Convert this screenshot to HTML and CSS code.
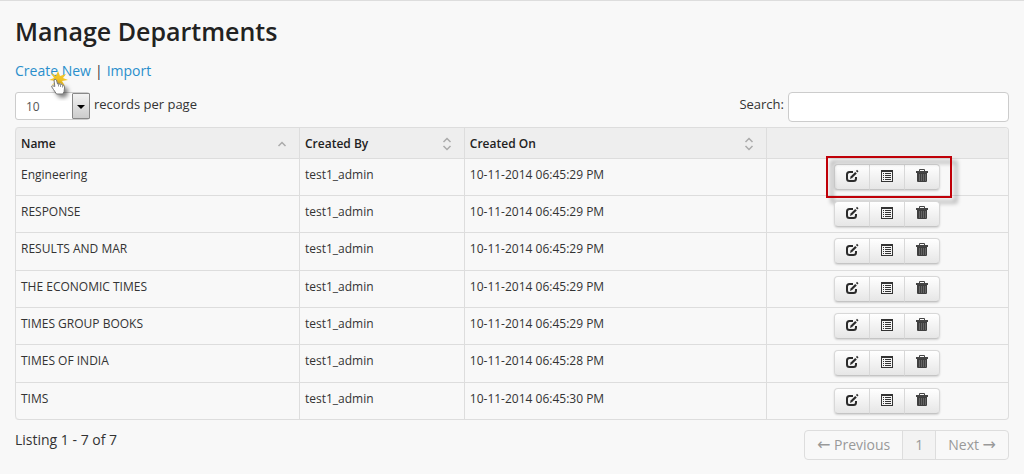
FILE: index.html
```html
<!DOCTYPE html>
<html lang="en">
<head>
<meta charset="utf-8">
<title>Manage Departments</title>
<link rel="stylesheet" href="styles.css">
</head>
<body>
<svg class="sprite" aria-hidden="true">
  <symbol id="edit" viewBox="0 0 14 14"><path d="M8 3H4.500Q2 3 2 5.500v4Q2 12 4.500 12h4Q11 12 11 9.500V8" fill="none" stroke="#2b2b2b" stroke-width="2"/><path d="M5 10l.6-2.400 4.600-4.700 1.600 1.600-4.700 4.600z" fill="#2b2b2b"/><path d="M11 2l1-1.200 1.500 1.400-1.200 1.200z" fill="#2b2b2b"/></symbol>
  <symbol id="list" viewBox="0 0 14 14"><path d="M1 1h12v12H1z" fill="#333"/><path d="M2 3h10v9H2z" fill="#f5f5f5"/><path d="M3 4h1v1H3zm2 0h6v1H5zM3 6h1v1H3zm2 0h6v1H5zM3 8h1v1H3zm2 0h6v1H5zM3 10h1v1H3zm2 0h6v1H5z" fill="#333"/></symbol>
  <symbol id="trash" viewBox="0 0 14 14"><path d="M4 2V1q0-1 1-1h4q1 0 1 1v1h3v2H1V2zM5 2h4V1H5z" fill="#444" fill-rule="evenodd"/><path d="M2 4h10v8q0 1-1 1H3q-1 0-1-1z" fill="#3f3f3f"/><path d="M4.500 5v7M6.500 5v7M8.500 5v7M10.500 5v7" stroke="#666"/></symbol>
  <symbol id="up" viewBox="0 0 10 14"><path d="M1.500 9L5 5.500 8.500 9" fill="none" stroke="#aaa" stroke-width="1.500"/></symbol>
  <symbol id="both" viewBox="0 0 10 14"><path d="M1.500 5L5 1.500 8.500 5M1.500 9L5 12.500 8.500 9" fill="none" stroke="#aaa" stroke-width="1.500"/></symbol>
</svg>
<main class="page">
  <h1 class="title">Manage Departments</h1>
  <nav class="links">
    <span class="pointed"><a href="#new">Create New</a>
      <svg class="pointer" viewBox="0 0 30 30" aria-hidden="true">
        <path d="M8 10l-7-1 5-2-3-5 5 3 2-5 2 5 6-2-3 4 5 2-6 1 3 5-5-3-2 5-2-5-5 3z" fill="#f3c526"/>
        <path class="hand" d="M6 9q1-1.500 2.500 0l1 4 1.200-.5 1.200.8 1.400-.2 1 1 1.300.2 1 1.700-.5 4.500-1.300 2.500H8.500L5.500 18.500 3.500 15.500q1-1.500 3.300 0z" fill="#fff" stroke="#777"/>
        <path d="M10.500 13v2.500M12.500 13.500v2.500M14.500 14v2.500" stroke="#999" fill="none"/>
      </svg></span>
    <span>|</span>
    <a href="#import">Import</a>
  </nav>
  <div class="toolbar">
    <label class="length"><span class="picker"><select class="select"><option>10</option><option>25</option><option>50</option></select><span class="arrow"></span></span>records per page</label>
    <label class="search">Search:<input class="field" type="text"></label>
  </div>
  <table class="grid">
    <colgroup><col class="c-name"><col class="c-by"><col class="c-on"><col class="c-act"></colgroup>
    <thead><tr>
      <th><div class="head">Name<svg class="sort"><use href="#up"/></svg></div></th>
      <th><div class="head">Created By<svg class="sort"><use href="#both"/></svg></div></th>
      <th><div class="head">Created On<svg class="sort"><use href="#both"/></svg></div></th>
      <th></th>
    </tr></thead>
    <tbody>
      <tr><td>Engineering</td><td>test1_admin</td><td>10-11-2014 06:45:29 PM</td><td class="actions"><div class="group"><button class="btn" aria-label="Edit"><svg><use href="#edit"/></svg></button><button class="btn" aria-label="Details"><svg><use href="#list"/></svg></button><button class="btn" aria-label="Delete"><svg><use href="#trash"/></svg></button><span class="callout"></span></div></td></tr>
      <tr><td>RESPONSE</td><td>test1_admin</td><td>10-11-2014 06:45:29 PM</td><td class="actions"><div class="group"><button class="btn" aria-label="Edit"><svg><use href="#edit"/></svg></button><button class="btn" aria-label="Details"><svg><use href="#list"/></svg></button><button class="btn" aria-label="Delete"><svg><use href="#trash"/></svg></button></div></td></tr>
      <tr><td>RESULTS AND MAR</td><td>test1_admin</td><td>10-11-2014 06:45:29 PM</td><td class="actions"><div class="group"><button class="btn" aria-label="Edit"><svg><use href="#edit"/></svg></button><button class="btn" aria-label="Details"><svg><use href="#list"/></svg></button><button class="btn" aria-label="Delete"><svg><use href="#trash"/></svg></button></div></td></tr>
      <tr><td>THE ECONOMIC TIMES</td><td>test1_admin</td><td>10-11-2014 06:45:29 PM</td><td class="actions"><div class="group"><button class="btn" aria-label="Edit"><svg><use href="#edit"/></svg></button><button class="btn" aria-label="Details"><svg><use href="#list"/></svg></button><button class="btn" aria-label="Delete"><svg><use href="#trash"/></svg></button></div></td></tr>
      <tr><td>TIMES GROUP BOOKS</td><td>test1_admin</td><td>10-11-2014 06:45:29 PM</td><td class="actions"><div class="group"><button class="btn" aria-label="Edit"><svg><use href="#edit"/></svg></button><button class="btn" aria-label="Details"><svg><use href="#list"/></svg></button><button class="btn" aria-label="Delete"><svg><use href="#trash"/></svg></button></div></td></tr>
      <tr><td>TIMES OF INDIA</td><td>test1_admin</td><td>10-11-2014 06:45:28 PM</td><td class="actions"><div class="group"><button class="btn" aria-label="Edit"><svg><use href="#edit"/></svg></button><button class="btn" aria-label="Details"><svg><use href="#list"/></svg></button><button class="btn" aria-label="Delete"><svg><use href="#trash"/></svg></button></div></td></tr>
      <tr><td>TIMS</td><td>test1_admin</td><td>10-11-2014 06:45:30 PM</td><td class="actions"><div class="group"><button class="btn" aria-label="Edit"><svg><use href="#edit"/></svg></button><button class="btn" aria-label="Details"><svg><use href="#list"/></svg></button><button class="btn" aria-label="Delete"><svg><use href="#trash"/></svg></button></div></td></tr>
    </tbody>
  </table>
  <footer class="footer">
    <span>Listing 1 - 7 of 7</span>
    <nav class="pager"><a href="#prev"><span class="glyph">←</span> Previous</a><a href="#1" class="current">1</a><a href="#next">Next <span class="glyph">→</span></a></nav>
  </footer>
</main>
</body>
</html>
```
FILE: styles.css
```css
* { box-sizing: border-box; }
body {
  margin: 0;
  background: #f8f8f8;
  color: #333;
  font: 14px/20px "Open Sans", sans-serif;
}
.sprite { position: absolute; width: 0; height: 0; }
.page { border-top: 1px solid #ddd; padding: 10px 15px 14px; }
.title { margin: 0; font-size: 25px; line-height: 40px; font-weight: 600; color: #222; }
a { color: #2a8fcc; text-decoration: none; }
.links { display: flex; gap: 4px; margin-top: 10px; }
.pointed { position: relative; }
.pointer { position: absolute; left: 33px; top: 10px; width: 30px; height: 30px; z-index: 1; }
.hand { filter: drop-shadow(3px 3px 2px rgba(0, 0, 0, .5)); }
.toolbar { display: flex; justify-content: space-between; margin-top: 11px; }
.length, .search { display: flex; gap: 4px; font-size: 13px; line-height: 24px; }
.picker { position: relative; height: 28px; }
.select {
  appearance: none;
  width: 75px;
  height: 28px;
  padding: 0 10px;
  border: 1px solid #ccc;
  border-radius: 3px;
  background: #fff;
  color: #555;
  font: 12px "Open Sans", sans-serif;
}
.arrow {
  position: absolute;
  right: 0;
  top: 1px;
  width: 18px;
  height: 26px;
  border: 1px solid #888;
  border-radius: 1px;
  background: linear-gradient(#f2f2f2, #ccc);
  pointer-events: none;
}
.arrow::after {
  content: "";
  position: absolute;
  left: 4px;
  top: 11px;
  border: 4px solid transparent;
  border-top-color: #000;
  border-bottom: 0;
}
.field {
  width: 221px;
  height: 30px;
  border: 1px solid #ccc;
  border-radius: 4px;
  background: #fff;
}
.grid {
  width: 100%;
  margin-top: 5px;
  table-layout: fixed;
  border: 1px solid #ddd;
  border-left: 0;
  border-radius: 4px;
  border-collapse: separate;
  border-spacing: 0;
  font-size: 12px;
}
.c-name { width: 28.6%; }
.c-by { width: 16.6%; }
.c-on { width: 30.4%; }
.c-act { width: 24.4%; }
th { padding: 6px 5px 4px; background: #eee; text-align: left; font-weight: 600; color: #222; border-left: 1px solid #ddd; }
th:first-child { border-top-left-radius: 4px; }
th:last-child { border-top-right-radius: 4px; }
.head { display: flex; justify-content: space-between; align-items: center; padding-right: 7px; }
.sort { width: 10px; height: 14px; }
td {
  height: 37px;
  padding: 6px 5px 4px;
  border-top: 1px solid #ddd;
  border-left: 1px solid #ddd;
  vertical-align: top;
}
tr:nth-child(3n) td { height: 38px; }
tr:last-child td:first-child { border-bottom-left-radius: 4px; }
tbody .actions { padding: 5px; text-align: center; }
.group {
  position: relative;
  display: inline-flex;
  vertical-align: top;
  border-radius: 4px;
  box-shadow: 0 1px 2px rgba(0, 0, 0, .15);
}
.btn {
  display: flex;
  align-items: center;
  justify-content: center;
  width: 36px;
  height: 26px;
  margin-left: -1px;
  padding: 0 0 2px;
  border: 1px solid #d8d8d8;
  border-bottom-color: #c4c4c4;
  background: linear-gradient(#fff, #e6e6e6);
}
.btn:first-child { margin-left: 0; border-radius: 4px 0 0 4px; }
.btn:nth-child(3) { border-radius: 0 4px 4px 0; }
.btn svg { width: 14px; height: 14px; }
.callout {
  position: absolute;
  inset: -8px -12px -8px -8px;
  border: 2px solid #c00008;
  filter: drop-shadow(5px 5px 2px rgba(0, 0, 0, .4));
  pointer-events: none;
}
.footer { display: flex; justify-content: space-between; align-items: flex-start; margin-top: 10px; }
.pager { display: flex; border: 1px solid #ddd; border-radius: 4px; }
.pager a { padding: 4px 12px; color: #999; }
.pager a + a { border-left: 1px solid #ddd; }
.pager .current { background: #f3f3f3; }
.glyph { font: 16px/16px "DejaVu Sans", sans-serif; }
```
